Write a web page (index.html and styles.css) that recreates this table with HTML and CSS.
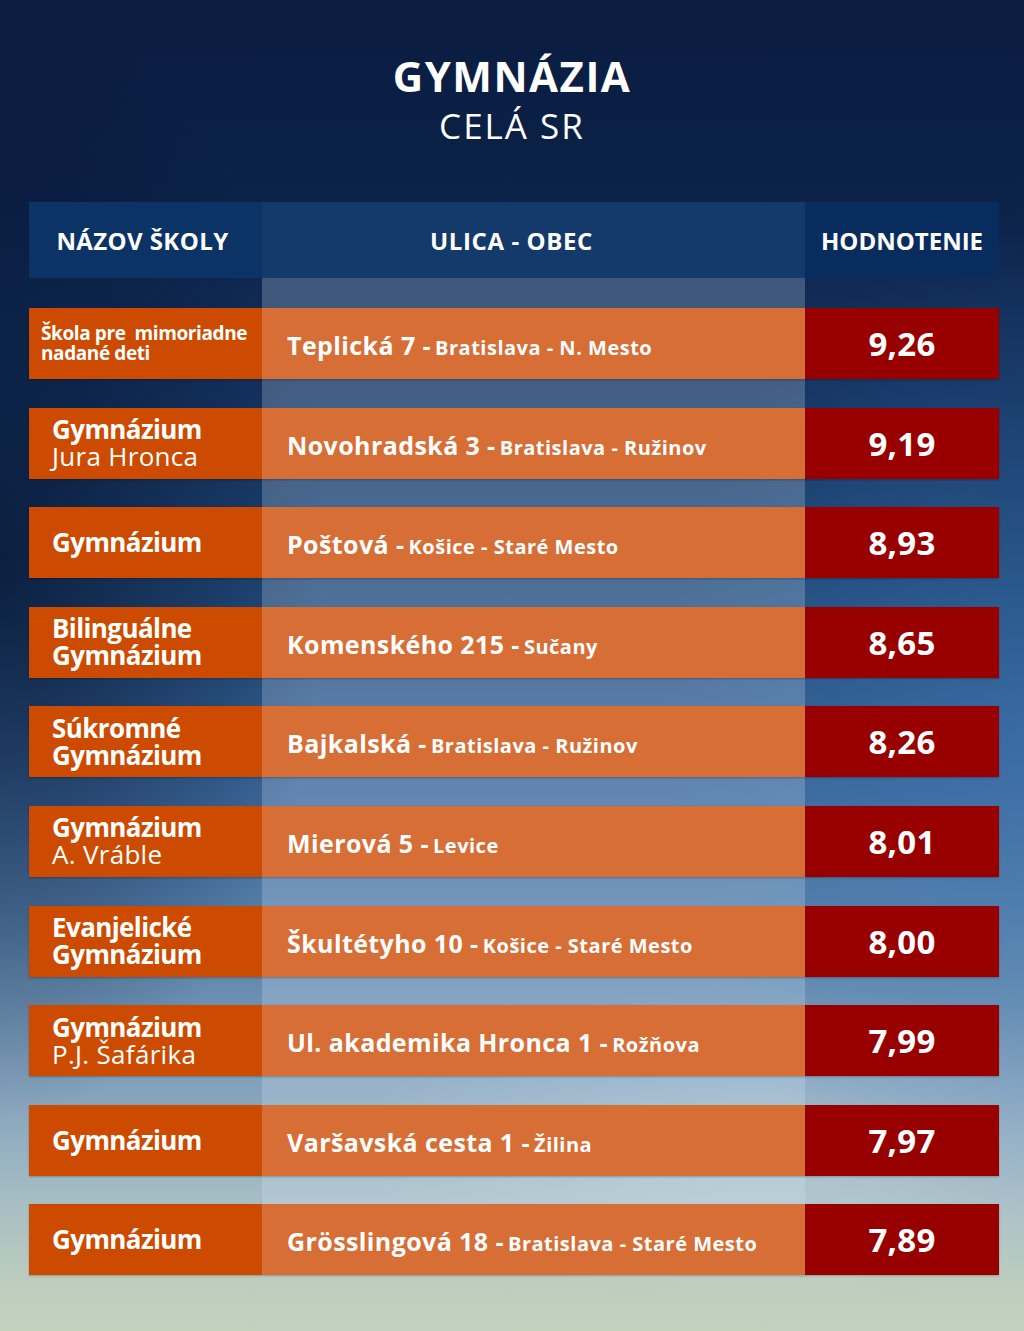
FILE: index.html
```html
<!DOCTYPE html>
<html lang="sk">
<head>
<meta charset="utf-8">
<title>Gymnázia – celá SR</title>
<link rel="stylesheet" href="styles.css">
</head>
<body>
<div class="page">
  <header class="heading">
    <h1 class="title">GYMNÁZIA</h1>
    <p class="subtitle">CELÁ SR</p>
  </header>

  <div class="table">
    <div class="thead">
      <div class="th th-name">NÁZOV ŠKOLY</div>
      <div class="th th-addr">ULICA - OBEC</div>
      <div class="th th-score">HODNOTENIE</div>
    </div>

    <div class="tbody">
      <div class="row">
        <div class="cell name name-small">Škola pre&nbsp; mimoriadne<br>nadané deti</div>
        <div class="cell addr"><span class="addr-text"><span class="street">Teplická 7 -</span> <span class="town">Bratislava - N. Mesto</span></span></div>
        <div class="cell score">9,26</div>
      </div>
      <div class="row">
        <div class="cell name"><span class="b">Gymnázium</span><span class="r">Jura Hronca</span></div>
        <div class="cell addr"><span class="addr-text"><span class="street">Novohradská 3 -</span> <span class="town">Bratislava - Ružinov</span></span></div>
        <div class="cell score">9,19</div>
      </div>
      <div class="row">
        <div class="cell name"><span class="b">Gymnázium</span></div>
        <div class="cell addr"><span class="addr-text"><span class="street">Poštová -</span> <span class="town">Košice - Staré Mesto</span></span></div>
        <div class="cell score">8,93</div>
      </div>
      <div class="row">
        <div class="cell name"><span class="b">Bilinguálne</span><span class="b">Gymnázium</span></div>
        <div class="cell addr"><span class="addr-text"><span class="street">Komenského 215 -</span> <span class="town">Sučany</span></span></div>
        <div class="cell score">8,65</div>
      </div>
      <div class="row">
        <div class="cell name"><span class="b">Súkromné</span><span class="b">Gymnázium</span></div>
        <div class="cell addr"><span class="addr-text"><span class="street">Bajkalská -</span> <span class="town">Bratislava - Ružinov</span></span></div>
        <div class="cell score">8,26</div>
      </div>
      <div class="row">
        <div class="cell name"><span class="b">Gymnázium</span><span class="r">A. Vráble</span></div>
        <div class="cell addr"><span class="addr-text"><span class="street">Mierová 5 -</span> <span class="town">Levice</span></span></div>
        <div class="cell score">8,01</div>
      </div>
      <div class="row">
        <div class="cell name"><span class="b">Evanjelické</span><span class="b">Gymnázium</span></div>
        <div class="cell addr"><span class="addr-text"><span class="street">Škultétyho 10 -</span> <span class="town">Košice - Staré Mesto</span></span></div>
        <div class="cell score">8,00</div>
      </div>
      <div class="row">
        <div class="cell name"><span class="b">Gymnázium</span><span class="r">P.J. Šafárika</span></div>
        <div class="cell addr"><span class="addr-text"><span class="street">Ul. akademika Hronca 1 -</span> <span class="town">Rožňova</span></span></div>
        <div class="cell score">7,99</div>
      </div>
      <div class="row">
        <div class="cell name"><span class="b">Gymnázium</span></div>
        <div class="cell addr"><span class="addr-text"><span class="street">Varšavská cesta 1 -</span> <span class="town">Žilina</span></span></div>
        <div class="cell score">7,97</div>
      </div>
      <div class="row">
        <div class="cell name"><span class="b">Gymnázium</span></div>
        <div class="cell addr"><span class="addr-text"><span class="street">Grösslingová 18 -</span> <span class="town">Bratislava - Staré Mesto</span></span></div>
        <div class="cell score">7,89</div>
      </div>
    </div>
  </div>
</div>
</body>
</html>
```

FILE: styles.css
```css
* { box-sizing: border-box; }

html, body {
  margin: 0;
  padding: 0;
}

body {
  font-family: "Open Sans", "DejaVu Sans", sans-serif;
  color: #ffffff;
  background: #0b1e42;
}

.page {
  width: 1024px;
  height: 1331px;
  overflow: hidden;
  padding-top: 51px;
  background:
    radial-gradient(ellipse 32% 42% at 0% 42%, rgba(5, 18, 45, 0.75), rgba(5, 18, 45, 0) 100%),
    radial-gradient(ellipse 35% 38% at 100% 55%, rgba(70, 130, 195, 0.35), rgba(70, 130, 195, 0) 100%),
    radial-gradient(ellipse 40% 12% at 75% 86%, rgba(220, 235, 240, 0.3), rgba(220, 235, 240, 0) 100%),
    linear-gradient(180deg,
      #0a1c40 0px,
      #0c2248 200px,
      #143361 380px,
      #1f4676 560px,
      #2c5687 680px,
      #3c679a 790px,
      #5a83ab 940px,
      #84a2bc 1090px,
      #a6bdc4 1200px,
      #bccdbe 1280px,
      #c3d2bd 1331px);
}

.heading {
  text-align: center;
}

.title {
  margin: 0;
  font-size: 42px;
  line-height: 50px;
  font-weight: 700;
  letter-spacing: 1.5px;
}

.subtitle {
  margin: 5px 0 0;
  font-size: 35px;
  line-height: 40px;
  font-weight: 400;
  letter-spacing: 2px;
}

.table {
  width: 970px;
  margin: 56px 0 0 29px;
}

.thead {
  display: grid;
  grid-template-columns: 233px 543px 194px;
  height: 76px;
}

.th {
  display: flex;
  align-items: center;
  justify-content: center;
  font-size: 24px;
  font-weight: 700;
  letter-spacing: 0;
}

.th-name { background: #0c3366; padding-right: 6px; letter-spacing: 0.4px; }
.th-addr { background: #133a6b; padding-right: 44px; letter-spacing: 0.6px; }
.th-score { background: #092c5e; }

.tbody {
  display: flex;
  flex-direction: column;
  gap: 28.6px;
  padding-top: 30px;
  background: linear-gradient(90deg,
    rgba(255, 255, 255, 0) 0px,
    rgba(255, 255, 255, 0) 233px,
    rgba(215, 230, 245, 0.24) 233px,
    rgba(215, 230, 245, 0.24) 776px,
    rgba(255, 255, 255, 0) 776px);
}

.row {
  display: grid;
  grid-template-columns: 233px 543px 194px;
  height: 71px;
  box-shadow: 0 1px 2px rgba(0, 0, 0, 0.25);
}

.cell {
  display: flex;
  align-items: center;
}

.name {
  background: #cc4b00;
  flex-direction: column;
  align-items: flex-start;
  justify-content: center;
  padding-left: 23px;
  font-size: 26px;
  line-height: 27px;
}

.name .b { font-weight: 700; letter-spacing: -0.6px; }
.name .r { font-weight: 400; letter-spacing: 0.3px; }

.name-small {
  display: block;
  padding: 15px 0 0 12px;
  font-size: 19px;
  line-height: 20px;
  font-weight: 700;
  letter-spacing: -0.4px;
}

.addr {
  background: #d66e36;
  padding: 3px 0 0 25px;
}

.addr-text {
  white-space: nowrap;
}

.street {
  font-size: 25px;
  font-weight: 700;
  letter-spacing: 0.4px;
}

.town {
  font-size: 20px;
  font-weight: 700;
  letter-spacing: 0.5px;
}

.score {
  background: #980000;
  justify-content: center;
  font-size: 33px;
  font-weight: 700;
  letter-spacing: 0.3px;
}
```
